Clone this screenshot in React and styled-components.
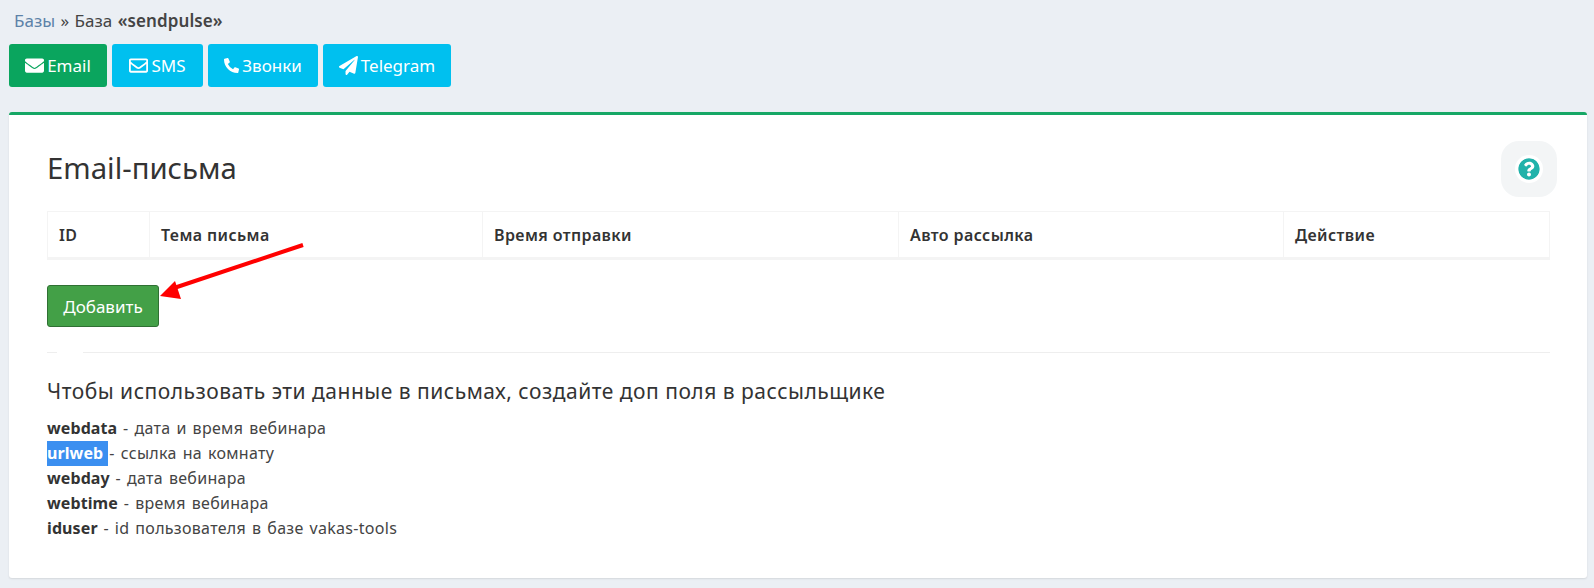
import React from 'react';
import styled, { createGlobalStyle } from 'styled-components';
import { FaEnvelope, FaRegEnvelope, FaPhoneAlt, FaPaperPlane, FaQuestionCircle } from 'react-icons/fa';

const GlobalStyle = createGlobalStyle`
  html, body {
    margin: 0;
    background: #ebeff4;
    color: #333;
    font-family: "Noto Sans", "Open Sans", sans-serif;
  }
`;

const Page = styled.div`
  padding: 10px 7px 9px 9px;
`;

const Breadcrumbs = styled.div`
  padding-left: 5px;
  font-size: 17px;
  line-height: 22px;
  word-spacing: 1px;
  color: #444;

  a {
    color: #5d82a8;
    text-decoration: none;
  }

  b {
    font-weight: 600;
    letter-spacing: 0.1px;
  }
`;

const Tabs = styled.nav`
  display: flex;
  gap: 5px;
  margin-top: 12px;
`;

const Tab = styled.a`
  box-sizing: border-box;
  display: flex;
  align-items: center;
  justify-content: center;
  gap: 3px;
  width: ${p => p.$width}px;
  height: 43px;
  border-radius: 3px;
  background: ${p => (p.$active ? '#0aa55e' : '#00c0ef')};
  color: #fff;
  font-size: 17px;

  svg {
    font-size: ${p => p.$iconSize || 19}px;
  }
`;

const Card = styled.section`
  position: relative;
  box-sizing: border-box;
  height: 466px;
  margin-top: 25px;
  padding: 26px 37px 0 38px;
  background: #fff;
  border-top: 3px solid #16a765;
  border-radius: 3px;
  box-shadow: 0 1px 2px rgba(0, 0, 0, 0.1);
`;

const CardHeader = styled.header`
  display: flex;
  align-items: center;
  justify-content: space-between;
  height: 56px;
  margin-right: -7px;
`;

const Title = styled.h1`
  margin: 0 0 2px;
  font-size: 29.3px;
  font-weight: 400;
  color: #333;
`;

const HelpButton = styled.div`
  display: flex;
  align-items: center;
  justify-content: center;
  width: 56px;
  height: 56px;
  border-radius: 18px;
  background: #f3f5f6;
  color: #20b2aa;
  font-size: 22px;

  svg {
    background: #fff;
    border-radius: 50%;
    box-shadow: 0 0 0 3px #fff;
  }
`;

const TableHead = styled.div`
  box-sizing: border-box;
  display: grid;
  grid-template-columns: 101px 333px 416px 385px 1fr;
  height: 49px;
  margin-top: 14px;
  border: 1px solid #f4f4f4;
  border-bottom-width: 3px;
`;

const HeadCell = styled.div`
  display: flex;
  align-items: center;
  padding-left: 11px;
  font-size: 16px;
  font-weight: 600;
  letter-spacing: 0.4px;
  border-left: ${p => (p.$first ? 0 : '1px solid #f4f4f4')};
`;

const AddButton = styled.button`
  display: block;
  box-sizing: border-box;
  width: 112px;
  height: 42px;
  margin-top: 25px;
  padding: 0;
  background: #43a047;
  border: 1px solid #2f7033;
  border-radius: 3px;
  color: #fff;
  font: inherit;
  font-size: 17px;
`;

const Divider = styled.hr`
  height: 1px;
  margin: 25px 0 0;
  border: 0;
  background: linear-gradient(to right, #eee 10px, #fff 10px, #fff 36px, #eee 36px);
`;

const Subtitle = styled.h3`
  margin: 26px 0 0;
  font-size: 21px;
  line-height: 24px;
  font-weight: 400;
  letter-spacing: 0.5px;
  color: #333;
`;

const Vars = styled.ul`
  margin: 13px 0 0;
  padding: 0;
  list-style: none;
  font-size: 16px;
  line-height: 25px;
  letter-spacing: 0.3px;
  word-spacing: 1.5px;
  color: #444;

  b {
    font-weight: 700;
    letter-spacing: 0.1px;
    color: #333;
  }
`;

const Selected = styled.b`
  && {
    color: #fff;
  }
  display: inline-block;
  background: #3b8ff0;
  padding-right: 5px;
  margin-right: 1px;
`;

const Arrow = styled.svg`
  position: absolute;
  left: 0;
  top: 0;
  width: 400px;
  height: 300px;
  pointer-events: none;
`;

const columns = ['ID', 'Тема письма', 'Время отправки', 'Авто рассылка', 'Действие'];

const vars = [
  ['webdata', 'дата и время вебинара'],
  ['urlweb', 'ссылка на комнату'],
  ['webday', 'дата вебинара'],
  ['webtime', 'время вебинара'],
  ['iduser', 'id пользователя в базе vakas-tools'],
];

export default function App() {
  return (
    <Page>
      <GlobalStyle />
      <Breadcrumbs>
        <a href="#bases">Базы</a> » База <b>«sendpulse»</b>
      </Breadcrumbs>
      <Tabs>
        <Tab $active $width={98}><FaEnvelope /> Email</Tab>
        <Tab $width={91}><FaRegEnvelope /> SMS</Tab>
        <Tab $width={110} $iconSize={15}><FaPhoneAlt /> Звонки</Tab>
        <Tab $width={128}><FaPaperPlane /> Telegram</Tab>
      </Tabs>
      <Card>
        <CardHeader>
          <Title>Email-письма</Title>
          <HelpButton><FaQuestionCircle /></HelpButton>
        </CardHeader>
        <TableHead>
          {columns.map((c, i) => (
            <HeadCell key={c} $first={i === 0}>{c}</HeadCell>
          ))}
        </TableHead>
        <AddButton>Добавить</AddButton>
        <Divider />
        <Subtitle>Чтобы использовать эти данные в письмах, создайте доп поля в рассыльщике</Subtitle>
        <Vars>
          {vars.map(([name, text]) => (
            <li key={name}>
              {name === 'urlweb' ? <Selected>{name}</Selected> : <b>{name} </b>}- {text}
            </li>
          ))}
        </Vars>
        <Arrow viewBox="0 0 400 300">
          <line x1="294" y1="130" x2="165" y2="173" stroke="#f00" strokeWidth="4" />
          <polygon points="151,181 166,166 172,184" fill="#f00" />
        </Arrow>
      </Card>
    </Page>
  );
}
